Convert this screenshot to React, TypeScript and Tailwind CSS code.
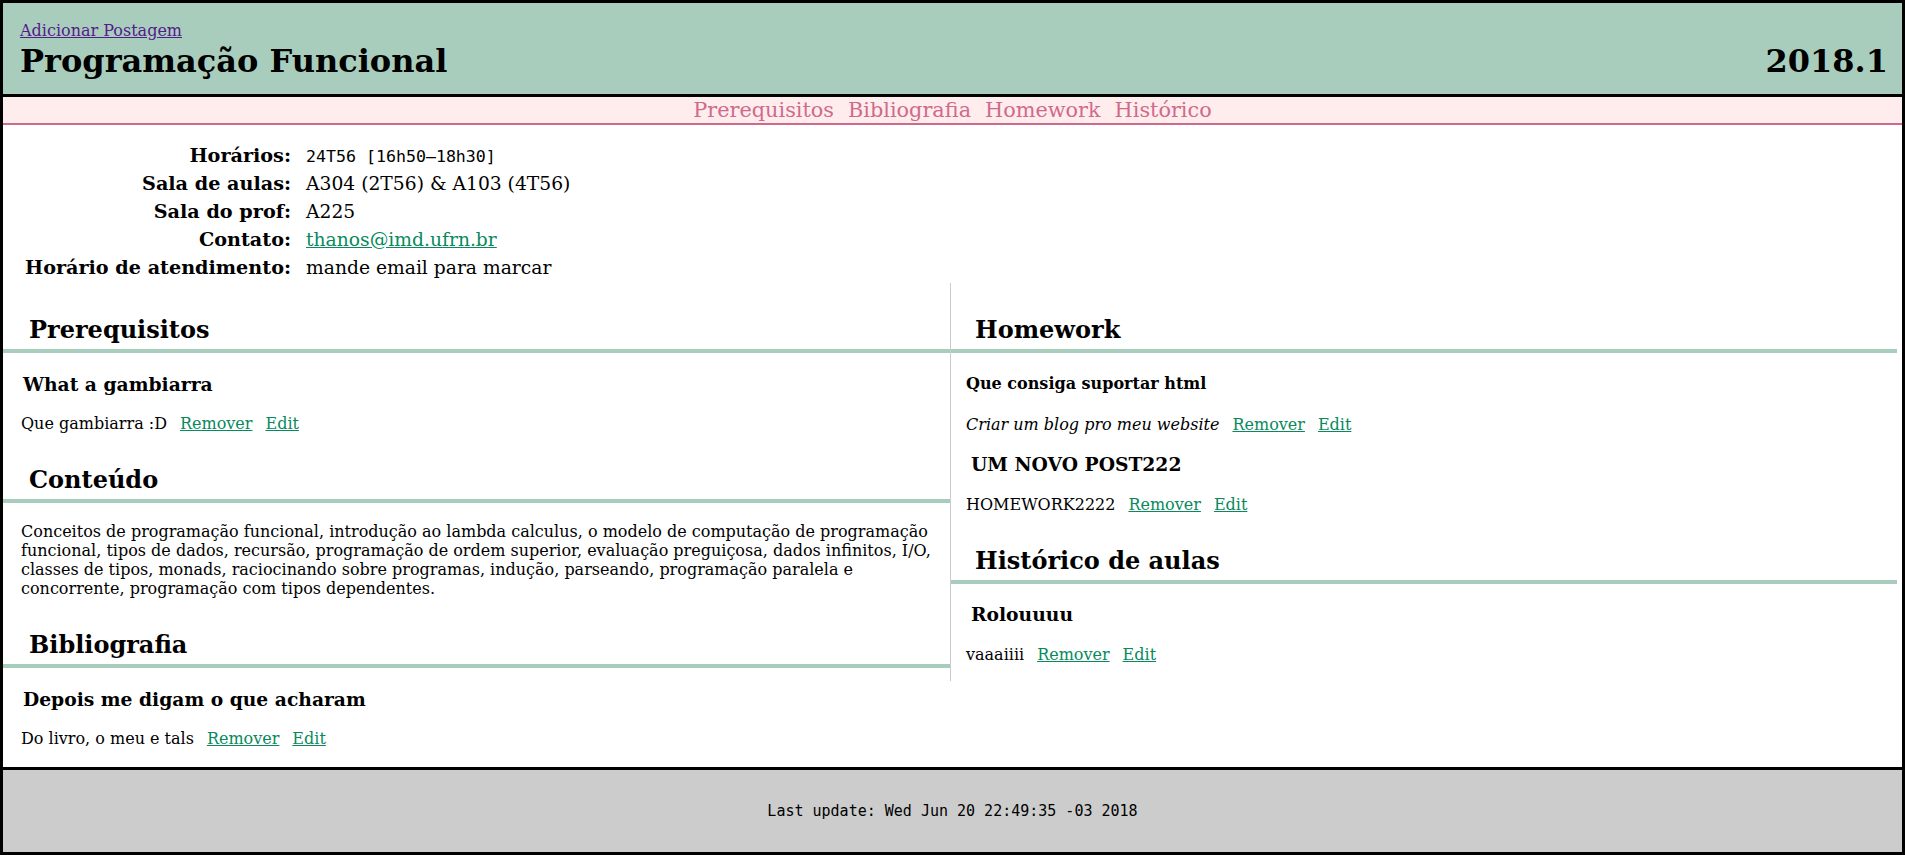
import React from 'react';

type Post = {
  title: string;
  body: string;
  small?: boolean;
  italic?: boolean;
};

const serif = "font-['DejaVu_Serif','Liberation_Serif',serif]";
const mono = "font-['DejaVu_Sans_Mono','Liberation_Mono',monospace]";

const info: { label: string; value: React.ReactNode }[] = [
  { label: 'Horários:', value: <code className={`${mono} text-[16.6px]`}>24T56 [16h50–18h30]</code> },
  { label: 'Sala de aulas:', value: 'A304 (2T56) & A103 (4T56)' },
  { label: 'Sala do prof:', value: 'A225' },
  {
    label: 'Contato:',
    value: (
      <a href="#" className="text-[#078a5c] underline">
        thanos@imd.ufrn.br
      </a>
    ),
  },
  { label: 'Horário de atendimento:', value: 'mande email para marcar' },
];

/* ================= PIECES ================= */

function SectionTitle({ children, left }: { children: React.ReactNode; left: boolean }) {
  return (
    <h2
      className={`mt-8 pb-[5px] text-2xl leading-[29px] font-bold border-b-4 border-[#a9cdbc] ${
        left ? 'pl-[26px]' : 'pl-[24px]'
      }`}
    >
      {children}
    </h2>
  );
}

function PostItem({ post, left }: { post: Post; left: boolean }) {
  return (
    <div className={left ? 'pl-[20px] pr-4' : 'pl-[15px] pr-4'}>
      {post.small ? (
        <h4 className="mt-[21px] text-[16px] leading-[19px] font-bold">{post.title}</h4>
      ) : (
        <h3
          className={`text-[18.72px] leading-[22px] font-bold ${left ? 'mt-[20px]' : 'mt-[19px] pl-[5px]'}`}
        >
          {post.title}
        </h3>
      )}
      <p
        className={`${post.small ? 'mt-[22px]' : left ? 'mt-[19px]' : 'mt-[20px]'} text-[16px] leading-[19px] ${
          left ? '-ml-[2px]' : ''
        }`}
      >
        <span className={post.italic ? 'italic' : ''}>{post.body}</span>
        <a href="#" className="ml-[13px] text-[#078a5c] underline">Remover</a>
        <a href="#" className="ml-[13px] text-[#078a5c] underline">Edit</a>
      </p>
    </div>
  );
}

/* ================= PAGE ================= */

export default function App() {
  return (
    <div className={`${serif} text-black h-screen flex flex-col border-[3px] border-black bg-white`}>
      {/* HEADER */}
      <header className="h-[91px] shrink-0 bg-[#a9cdbc] border-b-[3px] border-black box-content flex items-end justify-between pl-[17px] pr-[14px]">
        <div className="flex flex-col pb-[14px]">
          <a href="#" className="text-[#551a8b] underline text-[16px] leading-[19px] mb-[2px]">
            Adicionar Postagem
          </a>
          <h1 className="text-[32px] leading-[38px] font-bold">Programação Funcional</h1>
        </div>
        <div className="text-[32px] leading-[38px] font-bold pb-[14px]">2018.1</div>
      </header>

      {/* NAV */}
      <nav className="h-[26px] shrink-0 bg-[#ffeded] border-b-2 border-[#d06a8c] box-content flex items-center justify-center gap-[14px] text-[20.8px] leading-[25px] text-[#d06a8c]">
        <a href="#" className="pt-[1px]">Prerequisitos</a>
        <a href="#" className="pt-[1px]">Bibliografia</a>
        <a href="#" className="pt-[1px]">Homework</a>
        <a href="#" className="pt-[1px]">Histórico</a>
      </nav>

      {/* MAIN */}
      <main className="flex-1 min-h-0 border-b-[3px] border-black">
        <table className="mt-[17px] ml-[16px] border-separate border-spacing-x-[6px] border-spacing-y-0 text-[18.72px] leading-[22px]">
          <tbody>
            {info.map(row => (
              <tr key={row.label} className="h-[28px]">
                <th className="p-0 text-right text-[19.2px] leading-[22px] font-bold pr-[9px] align-middle">
                  {row.label}
                </th>
                <td className="p-0 leading-[22px] align-middle">{row.value}</td>
              </tr>
            ))}
          </tbody>
        </table>

        <div className="flex items-start mt-[1px]">
          {/* LEFT */}
          <div className="w-[947px] shrink-0">
            <SectionTitle left>Prerequisitos</SectionTitle>
            <PostItem left post={{ title: 'What a gambiarra', body: 'Que gambiarra :D' }} />

            <SectionTitle left>Conteúdo</SectionTitle>
            <p className="mt-[19px] pl-[18px] pr-[8px] text-[16px] leading-[19px]">
              Conceitos de programação funcional, introdução ao lambda calculus, o modelo de computação de
              programação funcional, tipos de dados, recursão, programação de ordem superior, evaluação
              preguiçosa, dados infinitos, I/O, classes de tipos, monads, raciocinando sobre programas,
              indução, parseando, programação paralela e concorrente, programação com tipos dependentes.
            </p>

            <SectionTitle left>Bibliografia</SectionTitle>
            <PostItem left post={{ title: 'Depois me digam o que acharam', body: 'Do livro, o meu e tals' }} />
          </div>

          {/* RIGHT */}
          <div className="flex-1 border-l border-[#cccccc] pb-[17px] pr-[5px]">
            <SectionTitle left={false}>Homework</SectionTitle>
            <PostItem
              left={false}
              post={{ title: 'Que consiga suportar html', body: 'Criar um blog pro meu website', small: true, italic: true }}
            />
            <PostItem left={false} post={{ title: 'UM NOVO POST222', body: 'HOMEWORK2222' }} />

            <SectionTitle left={false}>Histórico de aulas</SectionTitle>
            <PostItem left={false} post={{ title: 'Rolouuuu', body: 'vaaaiiii' }} />
          </div>
        </div>
      </main>

      {/* FOOTER */}
      <footer className="h-[82px] shrink-0 bg-[#cccccc] flex items-center justify-center">
        <span className={`${mono} text-[15px]`}>Last update: Wed Jun 20 22:49:35 -03 2018</span>
      </footer>
    </div>
  );
}
